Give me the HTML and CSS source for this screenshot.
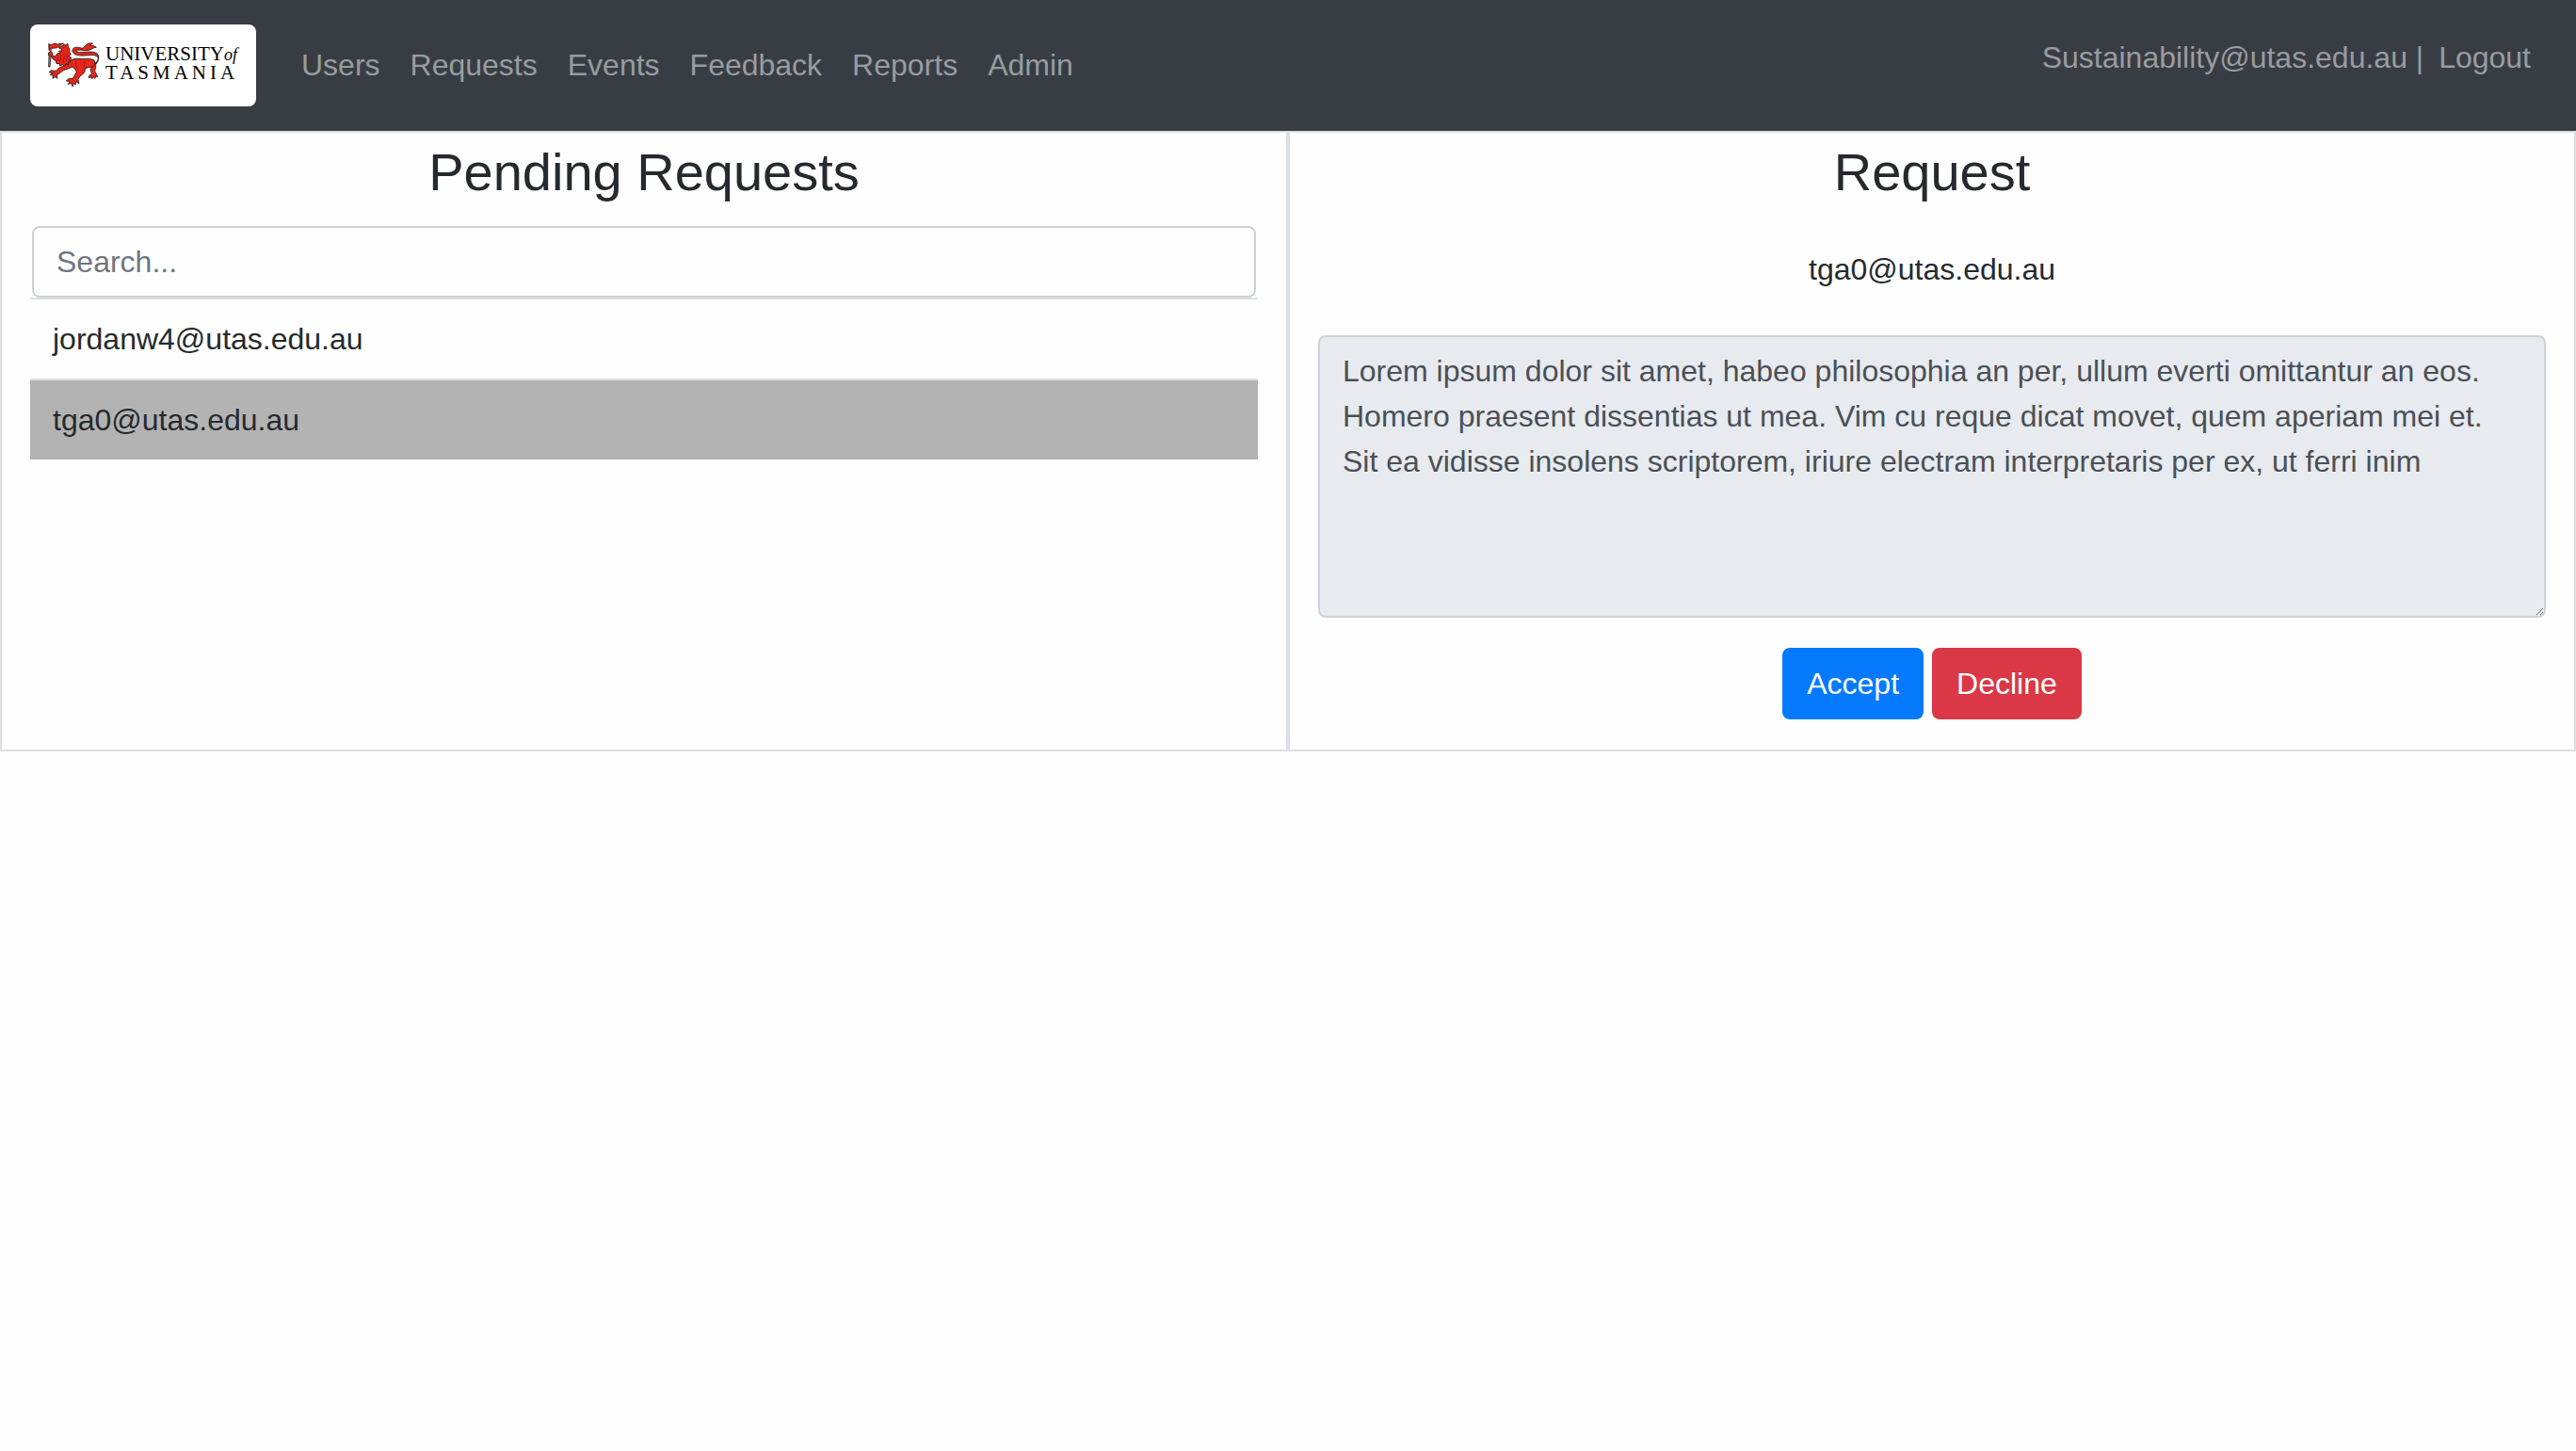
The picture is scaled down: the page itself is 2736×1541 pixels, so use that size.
FILE: index.html
```html
<!DOCTYPE html>
<html lang="en">
<head>
  <meta charset="utf-8">
  <meta name="viewport" content="width=device-width, initial-scale=1">
  <title>Pending Requests</title>
  <link rel="stylesheet" href="styles.css">
</head>
<body>
  <header class="navbar">
    <a class="brand" href="#" aria-label="University of Tasmania">
      <svg class="brand-lion" viewBox="93 103 168 150" aria-hidden="true">
        <g fill="#e8261b" stroke="#1b0f0e" stroke-width="2.4" stroke-linejoin="round" stroke-linecap="round">
          <path d="M99 150L98 184L102 184L105 150" fill="#999"/>
          <path d="M248 172Q262 158 252 150Q243 144 222 147Q194 151 180 143Q169 134 177 125Q184 118 205 125Q213 122 217 114Q224 107 239 109Q231 112 230 116Q242 114 250 122Q242 121 237 126Q228 133 212 132Q196 128 187 131Q184 136 196 138L230 136Q252 136 257 148Q260 163 250 174Z"/>
          <path d="M227 172Q239 183 231 193Q232 201 237 207L228 211L226 219L234 216L236 222L241 217L246 221L248 214L254 216L250 207Q241 197 248 186Q251 170 240 161Z"/>
          <path d="M166 163Q186 154 207 159Q235 154 244 166Q249 177 238 184Q224 184 214 190Q216 200 206 208Q195 214 192 224L195 237L187 231L183 241L178 235L174 247L170 236L160 240L165 230L154 229L162 221Q174 223 179 217Q178 209 187 201Q183 189 174 184Q159 190 145 195Q133 204 124 211L126 221L119 216L111 221L112 212L103 209L111 205L100 201L105 195Q118 199 124 195Q130 184 147 182Z"/>
          <path d="M138 127L130 124L135 118L142 118L146 111L151 115L159 110L160 119L165 128L163 136L169 143L164 149L171 157L164 160L168 169L161 168L162 177L153 174L148 182L142 177L134 181L132 173L123 174L121 165L112 160L106 150L98 148L97 139L105 135L110 139L111 149L119 151L125 142L136 139L130 134L140 132Z"/>
          <path d="M99 130L98 111L106 114L117 109L126 112L145 109L135 115L125 123L112 125L106 124L105 134Z"/>
          <g fill="none" stroke-width="1.2">
            <path d="M145 121L151 122M137 147Q139 157 134 167M147 145Q150 158 145 170M156 143Q158 154 155 165M127 154L126 165M184 166Q181 178 190 191M213 168Q208 180 214 189M174 223L180 229M115 202L121 208M191 128L198 132"/>
          </g>
        </g>
      </svg>
      <span class="brand-name">
        <span>UNIVERSITY<i>of</i></span>
        <span class="brand-place">TASMANIA</span>
      </span>
    </a>
    <nav class="nav-links" aria-label="Main">
      <a href="#">Users</a>
      <a href="#">Requests</a>
      <a href="#">Events</a>
      <a href="#">Feedback</a>
      <a href="#">Reports</a>
      <a href="#">Admin</a>
    </nav>
    <div class="account">
      <span>Sustainability@utas.edu.au |</span>
      <a href="#">Logout</a>
    </div>
  </header>

  <main class="columns">
    <section class="panel">
      <h1 class="panel-title">Pending Requests</h1>
      <div class="search">
        <input class="field" type="text" placeholder="Search..." aria-label="Search requests">
      </div>
      <table class="request-table">
        <tbody>
          <tr><td>jordanw4@utas.edu.au</td></tr>
          <tr class="selected"><td>tga0@utas.edu.au</td></tr>
        </tbody>
      </table>
    </section>

    <section class="panel">
      <h2 class="panel-title">Request</h2>
      <label class="sender" for="message">tga0@utas.edu.au</label>
      <textarea class="field message" id="message" readonly>Lorem ipsum dolor sit amet, habeo philosophia an per, ullum everti omittantur an eos. Homero praesent dissentias ut mea. Vim cu reque dicat movet, quem aperiam mei et. Sit ea vidisse insolens scriptorem, iriure electram interpretaris per ex, ut ferri inim</textarea>
      <div class="actions">
        <button class="btn btn-accept" type="button">Accept</button>
        <button class="btn btn-decline" type="button">Decline</button>
      </div>
    </section>
  </main>
</body>
</html>
```

FILE: styles.css
```css
*,
*::before,
*::after {
  box-sizing: border-box;
}

body {
  margin: 0;
  background: #fefefe;
  color: #262a2e;
  font: 32px/48px "Liberation Sans", Arial, sans-serif;
}

.navbar {
  display: flex;
  align-items: center;
  padding: 26px 32px;
  background: #383d44;
  color: #999c9f;
}

.navbar a {
  color: inherit;
  text-decoration: none;
}

.navbar .brand {
  display: flex;
  flex: none;
  gap: 6px;
  width: 240px;
  height: 87px;
  margin-right: 32px;
  padding: 18px;
  border-radius: 8px;
  background: #fff;
  color: #000;
}

.brand-lion {
  flex: none;
  width: 56px;
  height: 50px;
}

.brand-name {
  display: flex;
  flex-direction: column;
  padding-top: 4px;
  font: 21px/19px "Liberation Serif", "Times New Roman", serif;
  white-space: nowrap;
}

.brand-name i {
  font-size: 18px;
}

.brand-place {
  letter-spacing: 4px;
}

.nav-links {
  display: flex;
  padding-bottom: 2px;
}

.nav-links a {
  padding: 0 16px;
}

.account {
  display: flex;
  align-self: flex-start;
  gap: 16px;
  margin-left: auto;
  padding: 11px 16px;
}

.columns {
  display: grid;
  grid-template-columns: 1fr 1fr;
}

.panel {
  padding: 8px 30px 32px;
  border: 2px solid #dce0e5;
}

.panel-title {
  margin: 0 0 24px;
  font-size: 56px;
  font-weight: 400;
  line-height: 67px;
  text-align: center;
}

.search {
  padding: 0 2px;
}

.field {
  display: block;
  width: 100%;
  padding: 12px 24px;
  border: 2px solid #cdd2d8;
  border-radius: 8px;
  background: #fefefe;
  color: #4a5056;
  font: inherit;
}

.field::placeholder {
  color: #6e767e;
  opacity: 1;
}

.search .field {
  height: 76px;
}

.request-table {
  width: 100%;
  border-spacing: 0;
}

.request-table td {
  padding: 18px 24px;
  border-top: 2px solid #dce0e5;
}

.selected {
  background: #b3b3b3;
}

.sender {
  display: block;
  padding: 22px 0 46px;
  text-align: center;
}

.message {
  height: 300px;
  background: #e7eaef;
  resize: vertical;
}

.actions {
  display: flex;
  justify-content: center;
  gap: 9px;
  margin-top: 32px;
}

.btn {
  padding: 12px 24px;
  border: 2px solid transparent;
  border-radius: 8px;
  color: #fff;
  font: inherit;
}

.btn-accept {
  background-color: #057aff;
  border-color: #057aff;
}

.btn-decline {
  background-color: #da3846;
  border-color: #da3846;
}
```
